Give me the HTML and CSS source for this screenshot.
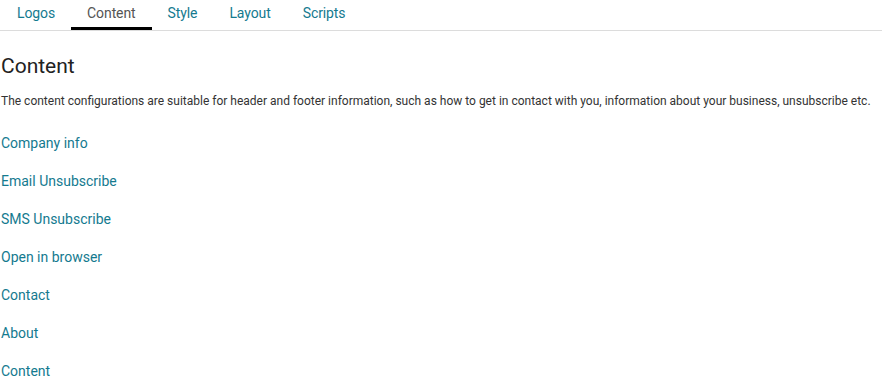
FILE: index.html
```html
<!DOCTYPE html>
<html lang="en">
<head>
    <meta charset="UTF-8">
    <meta name="viewport" content="width=device-width, initial-scale=1.0">
    <title>Content</title>
    <link rel="stylesheet" href="styles.css">
</head>
<body>
    <nav class="tabs">
        <a class="tab">Logos</a>
        <a class="tab active">Content</a>
        <a class="tab">Style</a>
        <a class="tab">Layout</a>
        <a class="tab">Scripts</a>
    </nav>
    <div class="page">
        <h2>Content</h2>
        <p class="intro">The content configurations are suitable for header and footer information, such as how to get in contact with you, information about your business, unsubscribe etc.</p>
        <ul class="links">
            <li><a>Company info</a></li>
            <li><a>Email Unsubscribe</a></li>
            <li><a>SMS Unsubscribe</a></li>
            <li><a>Open in browser</a></li>
            <li><a>Contact</a></li>
            <li><a>About</a></li>
            <li><a>Content</a></li>
        </ul>
    </div>
</body>
</html>
```

FILE: styles.css
```css
body {
    font-family: Roboto, 'Liberation Sans', sans-serif;
    margin: 0;
    padding: 0;
    background: white;
    color: #222;
}
.tabs {
    display: flex;
    padding-left: 1px;
    border-bottom: 1px solid #dcdcdc;
    height: 30px;
}
.tab {
    font-size: 14px;
    line-height: 16px;
    letter-spacing: -0.1px;
    padding: 5px 16px 0;
    color: #147a8f;
    cursor: pointer;
}
.tab.active {
    color: #555;
    border-bottom: 3px solid #000;
    height: 22px;
}
.page {
    padding: 0 1px;
}
h2 {
    font-size: 21px;
    font-weight: 400;
    line-height: 24px;
    margin: 23px 0 15px;
    color: #222;
}
.intro {
    font-size: 12px;
    line-height: 16px;
    margin: 0 0 26px;
    color: #333;
}
.links {
    list-style: none;
    margin: 0;
    padding: 0;
    display: flex;
    flex-direction: column;
    gap: 22px;
}
.links a {
    font-size: 14px;
    line-height: 16px;
    display: block;
    color: #147a8f;
    cursor: pointer;
}
```
